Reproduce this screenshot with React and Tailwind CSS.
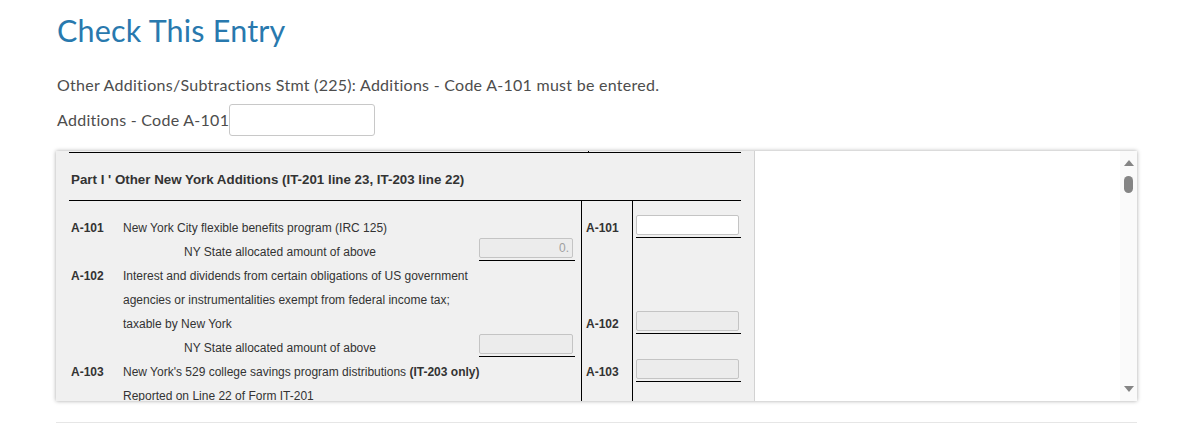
import React from 'react';

const rows = [
  { code: 'A-101', text: 'New York City flexible benefits program (IRC 125)', right: { code: 'A-101', input: 'white' } },
  { indent: true, text: 'NY State allocated amount of above', amount: '0.' },
  { code: 'A-102', text: 'Interest and dividends from certain obligations of US government' },
  { text: 'agencies or instrumentalities exempt from federal income tax;' },
  { text: 'taxable by New York', right: { code: 'A-102', input: 'gray' } },
  { indent: true, text: 'NY State allocated amount of above', amount: '' },
  { code: 'A-103', text: "New York's 529 college savings program distributions ", bold: '(IT-203 only)', right: { code: 'A-103', input: 'gray' } },
  { text: 'Reported on Line 22 of Form IT-201' },
];

function FieldCell({ value, gray, width }) {
  return (
    <div className={`border-b border-black ${width}`}>
      <div
        className={`h-5 mb-[2px] mr-[2px] rounded-[2px] border border-[#c4c4c4] text-right pr-[3px] text-[12px] leading-[18px] text-[#a0a0a0] ${
          gray ? 'bg-[#ececec]' : 'bg-white'
        }`}
      >
        {value}
      </div>
    </div>
  );
}

function FormRow({ row }) {
  return (
    <div className="flex h-6">
      <div className="w-[512px] flex items-start">
        <div className="w-[54px] pl-[2px] pt-px font-bold leading-6 shrink-0">{row.code}</div>
        <div className={`flex-1 pt-px leading-6 whitespace-nowrap ${row.indent ? 'pl-[61px]' : ''}`}>
          {row.text}
          {row.bold && <span className="font-bold">{row.bold}</span>}
        </div>
        {row.amount !== undefined && (
          <div className="mr-[6px] -mt-px">
            <FieldCell value={row.amount} gray width="w-[96px]" />
          </div>
        )}
      </div>
      <div className="w-[51px] border-l border-black pl-[4px] pt-px font-bold leading-6">{row.right?.code}</div>
      <div className="w-[109px] border-l border-black pl-[3px]">
        {row.right && <FieldCell value="" gray={row.right.input === 'gray'} width="w-[105px]" />}
      </div>
    </div>
  );
}

function Scrollbar() {
  return (
    <div className="w-[17px] bg-[#fafafa] flex flex-col items-center">
      <svg width="10" height="6" viewBox="0 0 10 6" className="mt-[9px]">
        <path d="M5 0L10 6H0z" fill="#858585" />
      </svg>
      <div className="mt-[10px] w-[9px] h-[17px] rounded-full bg-[#858585]" />
      <div className="flex-1" />
      <svg width="10" height="6" viewBox="0 0 10 6" className="mb-[9px]">
        <path d="M0 0H10L5 6z" fill="#858585" />
      </svg>
    </div>
  );
}

export default function App() {
  return (
    <div className="bg-white min-h-[444px] font-['Lato',sans-serif]">
      <div className="ml-[56px] w-[1081px] pt-[10px]">
        <h1 className="pl-px text-[30.5px] leading-[40px] text-[#2879ae] tracking-[0.2px]">Check This Entry</h1>
        <p className="pl-px mt-[24px] text-[16px] leading-[22px] text-[#4d4d4d] tracking-[0.27px]">
          Other Additions/Subtractions Stmt (225): Additions - Code A-101 must be entered.
        </p>
        <div className="pl-px mt-[8px] flex items-center text-[16px] text-[#4d4d4d] tracking-[0.27px]">
          <span>Additions - Code A-101</span>
          <div className="w-[146px] h-[32px] rounded-[3px] border border-[#c8c8c8] bg-white" />
        </div>

        <div className="mt-[15px] h-[250px] flex overflow-hidden shadow-[0_0_4px_rgba(0,0,0,0.35)] bg-white">
          <div className="w-[699px] bg-[#f0f0f0] border-r border-[#d2d2d2] pl-[13px] font-['Liberation_Sans',Arial,sans-serif] text-[12px] text-[#333]">
            <div className="h-px flex">
              <div className="ml-[519px] w-px h-px bg-black" />
            </div>
            <div className="w-[672px] border-t border-black">
              <div className="h-[47px] pt-[19px] pl-[2px] font-bold text-[13.33px] leading-[15px] text-[#333]">
                Part I ' Other New York Additions (IT-201 line 23, IT-203 line 22)
              </div>
            </div>
            <div className="w-[672px] border-t border-black">
              <div className="flex h-[14px]">
                <div className="w-[512px]" />
                <div className="w-[51px] border-l border-black" />
                <div className="w-[109px] border-l border-black" />
              </div>
              {rows.map((r, i) => (
                <FormRow key={i} row={r} />
              ))}
            </div>
          </div>
          <div className="flex-1" />
          <Scrollbar />
        </div>

        <div className="mt-[21px] h-px bg-[#e6e6e6]" />
      </div>
    </div>
  );
}
